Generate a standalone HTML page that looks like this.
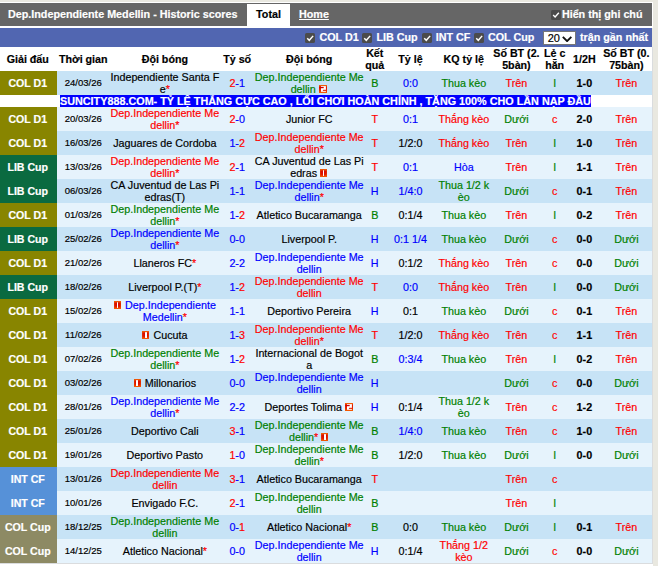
<!DOCTYPE html>
<html><head><meta charset="utf-8"><title>Historic scores</title>
<style>
html,body{margin:0;padding:0}
body{background:#fff;font-family:"Liberation Sans",sans-serif;font-size:10.75px;color:#000;width:659px;height:566px;overflow:hidden;position:relative;-webkit-text-stroke:0.18px currentColor}
#bg{position:absolute;left:0;top:0;width:658px;height:566px;background:#e9e8e0}
#wrap{position:absolute;left:0;top:2px;width:653px;height:26px;background:#fff}
#tw{position:absolute;left:0;top:47px;width:652.6px;height:516.5px;background:#dadcde}
#under{position:absolute;left:0;top:563.6px;width:652.6px;height:3px;background:#fff}
#bar{position:absolute;left:0;top:1px;width:652px;height:22.5px;background:#666;color:#fff;font-weight:bold;line-height:22.5px;white-space:nowrap}
#bar .title{position:absolute;left:8px;top:0}
#bar .tab{position:absolute;left:247px;top:1px;width:43px;height:23.5px;background:#fff;color:#000;text-align:center;line-height:20px}
#bar .home{position:absolute;left:299px;top:0;text-decoration:underline}
#bar .note{position:absolute;right:9.5px;top:0}
#bar .note .cb{width:9.8px;height:9.8px;margin-right:.6px;vertical-align:-1.6px}
#filt{position:absolute;left:0;top:28px;width:652px;height:18.7px;background:#5166b1;color:#fff;font-weight:bold;line-height:19px;white-space:nowrap}
.cb{display:inline-block;width:10.5px;height:10.5px;background:#4b4b4b;border-radius:1.6px;vertical-align:middle;position:relative}
.fi{position:absolute;top:0}
.fi .cb{margin-right:4px;vertical-align:-2px;width:10.2px;height:10.2px}
.sel{position:absolute;left:543.3px;top:3.2px;width:32.5px;height:13.6px;box-sizing:border-box;border:0.9px solid #767676;background:#fff;color:#000;font-weight:normal;font-size:11px;line-height:11px}
.sel .sv{position:absolute;left:3.4px;top:0.6px}
.sel svg{position:absolute;left:17.9px;top:3.6px;width:10.2px;height:6.1px}
.cb svg{position:absolute;left:0;top:0;width:100%;height:100%}
table{position:absolute;left:0;top:47px;width:652.2px;border-collapse:collapse;table-layout:fixed;word-break:break-all}
td,th{padding:0;text-align:center;vertical-align:middle;line-height:12px;overflow:hidden}
th{height:24px;font-weight:bold;background:#fff;font-size:10.7px}
th:first-child{padding-right:1.5px}
tr.o td{background:#c7e3f6}
tr.e td{background:#e6f3fc}
tr.o,tr.e{height:24px}
tr.ad{height:12px}
tr.ad td{background:#fff;text-align:left;line-height:12px;white-space:nowrap}
.adt{background:#00f;color:#fff;font-weight:bold;font-size:10.8px;margin-left:3px;display:inline-block;height:12px;line-height:12px}
td.lg{color:#fff;font-weight:bold;font-size:10.6px;padding-right:1.5px}
tr td.d1{background:#888500}
tr td.lib{background:#0a6a40}
tr td.int{background:#5691d8}
tr td.cup{background:#8d8a64}
td.dt{font-size:9.55px}
.r{color:#f00}.g{color:#008000}.b{color:#00f}.k{color:#000}
td.sc{color:#00f}
td.sc b{font-weight:normal}
td.ht{font-weight:bold}
i.s{font-style:normal;color:#f00}
i.c1{display:inline-block;width:7.2px;height:8.1px;background:linear-gradient(90deg,rgba(240,90,0,.55),rgba(208,0,0,0) 25%,rgba(208,0,0,0) 75%,rgba(240,90,0,.55)),linear-gradient(#f46a0a,#d80a00 30%,#dc1000 65%,#f86400);position:relative;vertical-align:baseline;margin-right:1px}
i.c1:after{content:"";position:absolute;left:2.9px;top:1.1px;width:1.4px;height:5.8px;background:#fff;border-radius:.6px}
i.c2{display:inline-block;width:8px;height:8px;vertical-align:baseline;margin-right:1px}
i.c2 svg{display:block;width:8px;height:8px}
</style></head><body>
<div id="bg"></div>
<div id="wrap">
<div id="bar"><span class="title">Dep.Independiente Medellin - Historic scores</span><span class="tab">Total</span><span class="home">Home</span><span class="note"><span class="cb"><svg viewBox="0 0 10 10"><path d="M2.2 5.2l2 2 3.8-4.4" fill="none" stroke="#fff" stroke-width="1.4"/></svg></span>Hiển thị ghi chú</span></div>
</div>
<div id="tw"></div><div id="under"></div>
<div id="filt">
<span class="fi" style="left:305.3px"><span class="cb"><svg viewBox="0 0 10 10"><path d="M2.2 5.2l2 2 3.8-4.4" fill="none" stroke="#fff" stroke-width="1.4"/></svg></span><span class="fl">COL D1</span></span>
<span class="fi" style="left:362.3px"><span class="cb"><svg viewBox="0 0 10 10"><path d="M2.2 5.2l2 2 3.8-4.4" fill="none" stroke="#fff" stroke-width="1.4"/></svg></span><span class="fl">LIB Cup</span></span>
<span class="fi" style="left:421.5px"><span class="cb"><svg viewBox="0 0 10 10"><path d="M2.2 5.2l2 2 3.8-4.4" fill="none" stroke="#fff" stroke-width="1.4"/></svg></span><span class="fl">INT CF</span></span>
<span class="fi" style="left:473.8px"><span class="cb"><svg viewBox="0 0 10 10"><path d="M2.2 5.2l2 2 3.8-4.4" fill="none" stroke="#fff" stroke-width="1.4"/></svg></span><span class="fl">COL Cup</span></span>
<span class="sel"><span class="sv">20</span><svg viewBox="0 0 10 6"><path d="M0.8 0.8L5 5l4.2-4.2" fill="none" stroke="#111" stroke-width="1.9"/></svg></span>
<span class="fi" style="left:580px">trận gần nhất</span>
</div>
<table>
<colgroup><col style="width:57px"><col style="width:52.5px"><col style="width:110.5px"><col style="width:34px"><col style="width:110px"><col style="width:21px"><col style="width:50.5px"><col style="width:56px"><col style="width:49.2px"><col style="width:27.2px"><col style="width:32.3px"><col style="width:51.5px"></colgroup>
<tr><th>Giải đấu</th><th>Thời gian</th><th>Đội bóng</th><th>Tỷ số</th><th>Đội bóng</th><th>Kết quả</th><th>Tỷ lệ</th><th>KQ tỷ lệ</th><th>Số BT (2.5bàn)</th><th>Lẻ chẵn</th><th>1/2H</th><th>Số BT (0.75bàn)</th></tr>
<tr class="o"><td class="lg d1">COL D1</td><td class="dt">24/03/26</td><td class="k">Independiente Santa Fe<i class="s">*</i></td><td class="sc"><b class="r">2</b>-1</td><td class="g">Dep.Independiente Medellin <i class="c2"><svg viewBox="0 0 8 8"><defs><linearGradient id="gq" x1="0" y1="0" x2="0" y2="1"><stop offset="0" stop-color="#f4700c"/><stop offset=".3" stop-color="#e01400"/><stop offset=".7" stop-color="#e82a00"/><stop offset="1" stop-color="#f86400"/></linearGradient></defs><rect width="8" height="8" fill="url(#gq)"/><rect x="2" y="1.1" width="4.9" height="5.7" fill="#fff"/><rect x="0.4" y="1.9" width="4.3" height="1.3" fill="#d00000"/><rect x="3.9" y="4.8" width="3.2" height="1.1" fill="#e22400"/></svg></i></td><td class="g">B</td><td class="b">0:0</td><td class="g">Thua kèo</td><td class="r">Trên</td><td class="g">l</td><td class="ht">1-0</td><td class="r">Trên</td></tr>
<tr class="ad"><td></td><td colspan="11"><a class="adt">SUNCITY888.COM- TỶ LỆ THẮNG CỰC CAO , LỐI CHƠI HOÀN CHỈNH , TẶNG 100% CHO LẦN NẠP ĐẦU</a></td></tr>
<tr class="e"><td class="lg d1">COL D1</td><td class="dt">20/03/26</td><td class="r">Dep.Independiente Medellin<i class="s">*</i></td><td class="sc"><b class="r">2</b>-0</td><td class="k">Junior FC</td><td class="r">T</td><td class="b">0:1</td><td class="r">Thắng kèo</td><td class="g">Dưới</td><td class="r">c</td><td class="ht">2-0</td><td class="r">Trên</td></tr>
<tr class="o"><td class="lg d1">COL D1</td><td class="dt">16/03/26</td><td class="k">Jaguares de Cordoba</td><td class="sc">1-<b class="r">2</b></td><td class="r">Dep.Independiente Medellin<i class="s">*</i></td><td class="r">T</td><td class="k">1/2:0</td><td class="r">Thắng kèo</td><td class="r">Trên</td><td class="g">l</td><td class="ht">1-0</td><td class="r">Trên</td></tr>
<tr class="e"><td class="lg lib">LIB Cup</td><td class="dt">13/03/26</td><td class="r">Dep.Independiente Medellin<i class="s">*</i></td><td class="sc"><b class="r">2</b>-1</td><td class="k">CA Juventud de Las Piedras <i class="c1"></i></td><td class="r">T</td><td class="b">0:1</td><td class="b">Hòa</td><td class="r">Trên</td><td class="g">l</td><td class="ht">1-1</td><td class="r">Trên</td></tr>
<tr class="o"><td class="lg lib">LIB Cup</td><td class="dt">06/03/26</td><td class="k">CA Juventud de Las Piedras(T)</td><td class="sc">1-1</td><td class="b">Dep.Independiente Medellin<i class="s">*</i></td><td class="b">H</td><td class="b">1/4:0</td><td class="g">Thua 1/2 kèo</td><td class="g">Dưới</td><td class="r">c</td><td class="ht">0-1</td><td class="r">Trên</td></tr>
<tr class="e"><td class="lg d1">COL D1</td><td class="dt">01/03/26</td><td class="g">Dep.Independiente Medellin<i class="s">*</i></td><td class="sc">1-<b class="r">2</b></td><td class="k">Atletico Bucaramanga</td><td class="g">B</td><td class="k">0:1/4</td><td class="g">Thua kèo</td><td class="r">Trên</td><td class="g">l</td><td class="ht">0-2</td><td class="r">Trên</td></tr>
<tr class="o"><td class="lg lib">LIB Cup</td><td class="dt">25/02/26</td><td class="b">Dep.Independiente Medellin<i class="s">*</i></td><td class="sc">0-0</td><td class="k">Liverpool P.</td><td class="b">H</td><td class="b">0:1 1/4</td><td class="g">Thua kèo</td><td class="g">Dưới</td><td class="r">c</td><td class="ht">0-0</td><td class="g">Dưới</td></tr>
<tr class="e"><td class="lg d1">COL D1</td><td class="dt">21/02/26</td><td class="k">Llaneros FC<i class="s">*</i></td><td class="sc">2-2</td><td class="b">Dep.Independiente Medellin</td><td class="b">H</td><td class="k">0:1/2</td><td class="r">Thắng kèo</td><td class="r">Trên</td><td class="r">c</td><td class="ht">0-0</td><td class="g">Dưới</td></tr>
<tr class="o"><td class="lg lib">LIB Cup</td><td class="dt">18/02/26</td><td class="k">Liverpool P.(T)<i class="s">*</i></td><td class="sc">1-<b class="r">2</b></td><td class="r">Dep.Independiente Medellin</td><td class="r">T</td><td class="b">0:0</td><td class="r">Thắng kèo</td><td class="r">Trên</td><td class="g">l</td><td class="ht">0-0</td><td class="g">Dưới</td></tr>
<tr class="e"><td class="lg d1">COL D1</td><td class="dt">15/02/26</td><td class="b"><i class="c1"></i> Dep.Independiente Medellin<i class="s">*</i></td><td class="sc">1-1</td><td class="k">Deportivo Pereira</td><td class="b">H</td><td class="k">0:1</td><td class="g">Thua kèo</td><td class="g">Dưới</td><td class="r">c</td><td class="ht">0-1</td><td class="r">Trên</td></tr>
<tr class="o"><td class="lg d1">COL D1</td><td class="dt">11/02/26</td><td class="k"><i class="c1"></i> Cucuta</td><td class="sc">1-<b class="r">3</b></td><td class="r">Dep.Independiente Medellin<i class="s">*</i></td><td class="r">T</td><td class="k">1/2:0</td><td class="r">Thắng kèo</td><td class="r">Trên</td><td class="r">c</td><td class="ht">1-1</td><td class="r">Trên</td></tr>
<tr class="e"><td class="lg d1">COL D1</td><td class="dt">07/02/26</td><td class="g">Dep.Independiente Medellin<i class="s">*</i></td><td class="sc">1-<b class="r">2</b></td><td class="k">Internacional de Bogota</td><td class="g">B</td><td class="b">0:3/4</td><td class="g">Thua kèo</td><td class="r">Trên</td><td class="g">l</td><td class="ht">0-2</td><td class="r">Trên</td></tr>
<tr class="o"><td class="lg d1">COL D1</td><td class="dt">03/02/26</td><td class="k"><i class="c1"></i> Millonarios</td><td class="sc">0-0</td><td class="b">Dep.Independiente Medellin</td><td class="b">H</td><td class="k"></td><td class="b"></td><td class="g">Dưới</td><td class="r">c</td><td class="ht">0-0</td><td class="g">Dưới</td></tr>
<tr class="e"><td class="lg d1">COL D1</td><td class="dt">28/01/26</td><td class="b">Dep.Independiente Medellin<i class="s">*</i></td><td class="sc">2-2</td><td class="k">Deportes Tolima <i class="c2"><svg viewBox="0 0 8 8"><defs><linearGradient id="gq" x1="0" y1="0" x2="0" y2="1"><stop offset="0" stop-color="#f4700c"/><stop offset=".3" stop-color="#e01400"/><stop offset=".7" stop-color="#e82a00"/><stop offset="1" stop-color="#f86400"/></linearGradient></defs><rect width="8" height="8" fill="url(#gq)"/><rect x="2" y="1.1" width="4.9" height="5.7" fill="#fff"/><rect x="0.4" y="1.9" width="4.3" height="1.3" fill="#d00000"/><rect x="3.9" y="4.8" width="3.2" height="1.1" fill="#e22400"/></svg></i></td><td class="b">H</td><td class="k">0:1/4</td><td class="g">Thua 1/2 kèo</td><td class="r">Trên</td><td class="r">c</td><td class="ht">1-2</td><td class="r">Trên</td></tr>
<tr class="o"><td class="lg d1">COL D1</td><td class="dt">25/01/26</td><td class="k">Deportivo Cali</td><td class="sc"><b class="r">3</b>-1</td><td class="g">Dep.Independiente Medellin<i class="s">*</i> <i class="c1"></i></td><td class="g">B</td><td class="b">1/4:0</td><td class="g">Thua kèo</td><td class="r">Trên</td><td class="r">c</td><td class="ht">1-0</td><td class="r">Trên</td></tr>
<tr class="e"><td class="lg d1">COL D1</td><td class="dt">19/01/26</td><td class="k">Deportivo Pasto</td><td class="sc"><b class="r">1</b>-0</td><td class="g">Dep.Independiente Medellin<i class="s">*</i></td><td class="g">B</td><td class="k">1/2:0</td><td class="g">Thua kèo</td><td class="g">Dưới</td><td class="g">l</td><td class="ht">0-0</td><td class="g">Dưới</td></tr>
<tr class="o"><td class="lg int">INT CF</td><td class="dt">13/01/26</td><td class="r">Dep.Independiente Medellin</td><td class="sc"><b class="r">3</b>-1</td><td class="k">Atletico Bucaramanga</td><td class="r">T</td><td class="k"></td><td class="b"></td><td class="r">Trên</td><td class="r">c</td><td class="ht"></td><td class="k"></td></tr>
<tr class="e"><td class="lg int">INT CF</td><td class="dt">10/01/26</td><td class="k">Envigado F.C.</td><td class="sc"><b class="r">2</b>-1</td><td class="g">Dep.Independiente Medellin</td><td class="g">B</td><td class="k"></td><td class="b"></td><td class="r">Trên</td><td class="g">l</td><td class="ht"></td><td class="k"></td></tr>
<tr class="o"><td class="lg cup">COL Cup</td><td class="dt">18/12/25</td><td class="g">Dep.Independiente Medellin</td><td class="sc">0-<b class="r">1</b></td><td class="k">Atletico Nacional<i class="s">*</i></td><td class="g">B</td><td class="k">0:0</td><td class="g">Thua kèo</td><td class="g">Dưới</td><td class="g">l</td><td class="ht">0-1</td><td class="r">Trên</td></tr>
<tr class="e"><td class="lg cup">COL Cup</td><td class="dt">14/12/25</td><td class="k">Atletico Nacional<i class="s">*</i></td><td class="sc">0-0</td><td class="b">Dep.Independiente Medellin</td><td class="b">H</td><td class="k">0:1/4</td><td class="r">Thắng 1/2 kèo</td><td class="g">Dưới</td><td class="r">c</td><td class="ht">0-0</td><td class="g">Dưới</td></tr>
</table>
</body></html>
